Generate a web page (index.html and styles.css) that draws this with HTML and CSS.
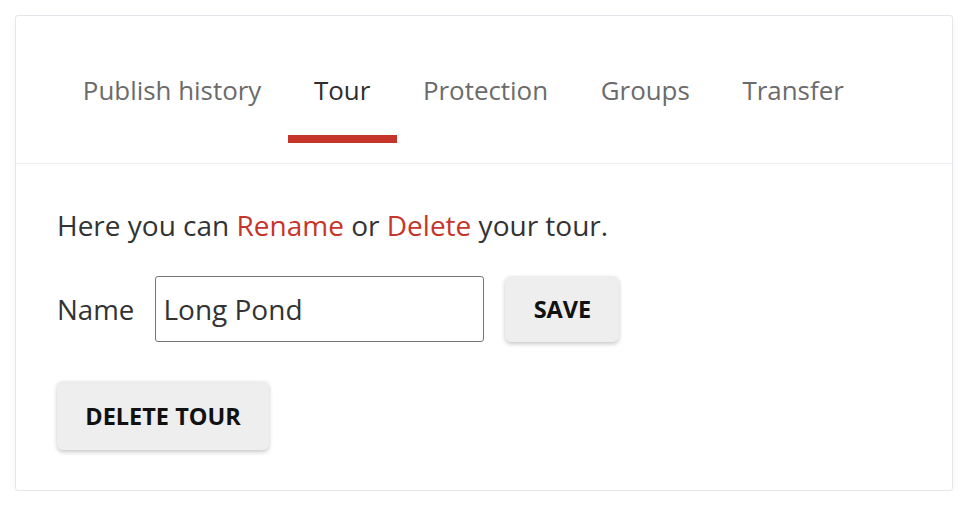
FILE: index.html
```html
<!DOCTYPE html>
<html lang="en">
<head>
<meta charset="utf-8">
<title>Tour settings</title>
<link rel="stylesheet" href="styles.css">
</head>
<body>
<div class="card">
  <nav class="tabs">
    <a class="tab">Publish history</a>
    <a class="tab active">Tour</a>
    <a class="tab">Protection</a>
    <a class="tab">Groups</a>
    <a class="tab">Transfer</a>
  </nav>
  <section class="content">
    <p class="intro">Here you can <span class="hl">Rename</span> or <span class="hl">Delete</span> your tour.</p>
    <div class="name-row">
      <label class="label" for="name">Name</label>
      <input class="input" id="name" type="text" value="Long Pond">
      <button class="btn btn-save">SAVE</button>
    </div>
    <button class="btn btn-delete">DELETE TOUR</button>
  </section>
</div>
</body>
</html>
```

FILE: styles.css
```css
* { box-sizing: border-box; }
body {
  margin: 0;
  background: #ffffff;
  font-family: "Open Sans", "Noto Sans", sans-serif;
  color: #333333;
}
.card {
  margin: 15px 0 0 15px;
  width: 938px;
  height: 476px;
  border: 1px solid #e3e6ea;
  border-radius: 3px;
  background: #fff;
  box-shadow: 0 2px 6px rgba(0,0,0,0.04);
}
.tabs {
  display: flex;
  align-items: flex-end;
  padding: 58px 41px 20px 40.5px;
  border-bottom: 1px solid #eceef1;
}
.tab {
  padding: 0 26.35px 29px;
  font-size: 25.9px;
  line-height: 32px;
  color: #6b6b6b;
  border-bottom: 8px solid transparent;
  cursor: pointer;
}
.tab.active {
  color: #2e2e2e;
  border-bottom-color: #c6352a;
}
.content {
  padding: 43px 41px 0;
}
.intro {
  margin: 0;
  font-size: 28px;
  line-height: 36px;
  color: #333;
}
.hl { color: #c6352a; }
.name-row {
  display: flex;
  align-items: center;
  margin-top: 33px;
}
.label {
  font-size: 27.7px;
  line-height: 36px;
  margin-right: 21px;
}
.input {
  width: 329px;
  height: 66px;
  border: 1px solid #767676;
  border-radius: 3px;
  padding: 0 7px;
  font-family: inherit;
  font-size: 28px;
  color: #333;
  margin-right: 21px;
  outline: none;
}
.btn {
  border: none;
  background: #eeeeee;
  border-radius: 6px;
  font-family: inherit;
  font-weight: 700;
  font-size: 23.5px;
  color: #111;
  box-shadow: 0 2px 4px rgba(0,0,0,0.22);
  cursor: pointer;
}
.btn-save {
  width: 114px;
  height: 66px;
}
.btn-delete {
  margin-top: 39px;
  width: 212px;
  height: 69px;
}
```
